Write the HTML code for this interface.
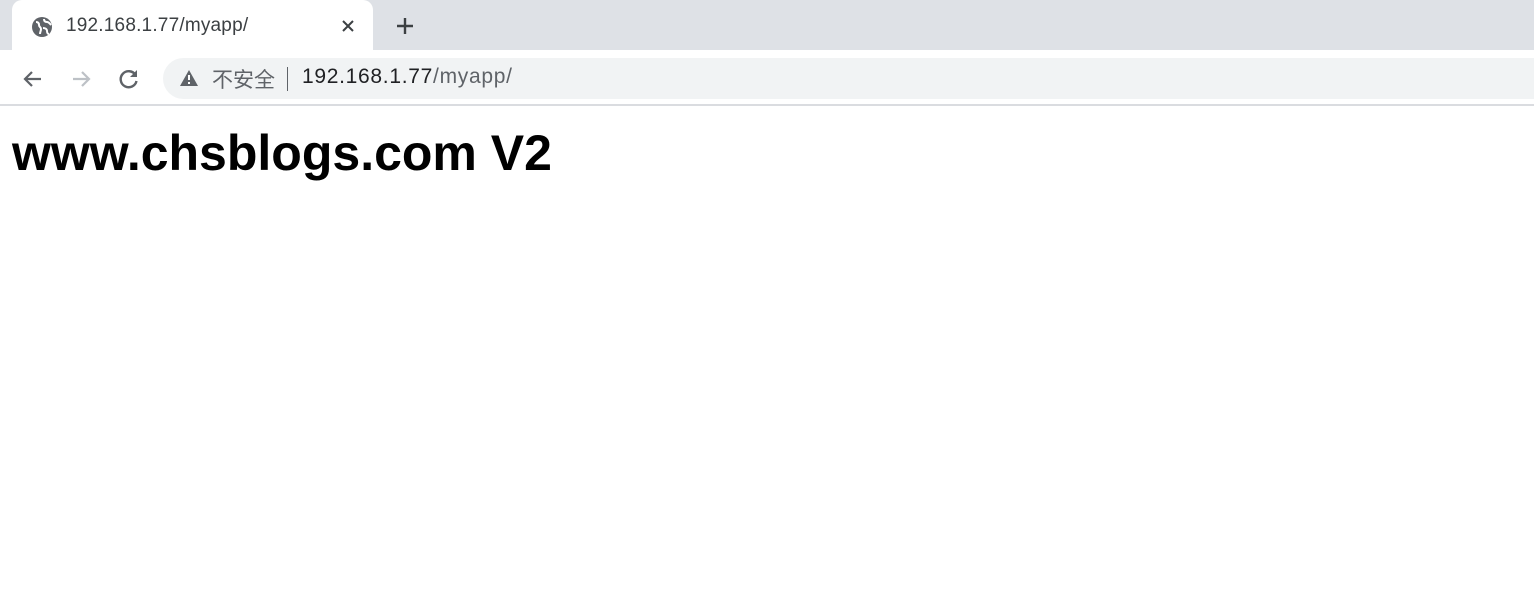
<!DOCTYPE html>
<html><head><meta charset="utf-8"><style>
*{margin:0;padding:0;box-sizing:border-box}
body{width:1534px;height:589px;background:#fff;font-family:"Liberation Sans","Noto Sans CJK SC",sans-serif;position:relative;overflow:hidden}
.tabbar{position:absolute;left:0;top:0;width:1534px;height:50px;background:#dee1e6}
.tab{position:absolute;left:12px;top:0;width:361px;height:50px;background:#fff;border-radius:10px 10px 0 0}
.tab .t{position:absolute;left:54px;top:15px;font-size:19px;letter-spacing:0.2px;color:#3c4043}
.abs{position:absolute}
.omni{position:absolute;left:163px;top:58px;width:1400px;height:41px;background:#f1f3f4;border-radius:21px}
.line{position:absolute;left:0;top:104px;width:1534px;height:2px;background:#dadce0}
h1{position:absolute;left:12px;top:123px;font-size:50px;font-weight:bold;color:#000;line-height:60px;white-space:nowrap}
</style></head><body>
<div class="tabbar"></div>
<div class="tab">
<svg class="abs" style="left:19px;top:16px" width="22" height="22" viewBox="0 0 22 22"><circle cx="11" cy="11" r="10" fill="#5f6368"/><path d="M5 6c2 0 3 1 3 3s2 2 2 4-1 3-1 5M13 3c0 2 1 3 3 3s3 2 4 3M12 12c2 0 4 1 4 3s1 3 2 3" stroke="#fff" stroke-width="2" fill="none"/></svg>
<div class="t">192.168.1.77/myapp/</div>
<svg class="abs" style="left:329px;top:19px" width="14" height="14" viewBox="0 0 14 14"><path d="M2 2L12 12M12 2L2 12" stroke="#3c4043" stroke-width="2"/></svg>
</div>
<svg class="abs" style="left:395px;top:16px" width="20" height="20" viewBox="0 0 20 20"><path d="M10 2V18M2 10H18" stroke="#3c4043" stroke-width="2.4"/></svg>
<svg class="abs" style="left:21px;top:67px" width="24" height="24" viewBox="0 0 24 24"><path d="M20 12H5M11 5L4 12L11 19" stroke="#5f6368" stroke-width="2.2" fill="none"/></svg>
<svg class="abs" style="left:69px;top:67px" width="24" height="24" viewBox="0 0 24 24"><path d="M4 12H19M13 5L20 12L13 19" stroke="#bdc1c6" stroke-width="2.2" fill="none"/></svg>
<svg class="abs" style="left:117px;top:67px" width="24" height="24" viewBox="0 0 24 24"><path d="M18.5 8A8 8 0 1 0 19.5 14" stroke="#5f6368" stroke-width="2.4" fill="none"/><path d="M20 3V10H13Z" fill="#5f6368"/></svg>
<div class="omni"></div>
<svg class="abs" style="left:179px;top:69px" width="20" height="18" viewBox="0 0 20 18"><path d="M10 1L19 17H1Z" fill="#5f6368"/><path d="M10 6V11M10 13V15" stroke="#fff" stroke-width="2"/></svg>
<div class="abs" style="left:212px;top:64px;font-size:21px;color:#5f6368">不安全</div>
<div class="abs" style="left:287px;top:67px;width:1px;height:24px;background:#5f6368"></div>
<div class="abs" style="left:302px;top:65px;font-size:21px;letter-spacing:0.7px;color:#202124">192.168.1.77<span style="color:#5f6368">/myapp/</span></div>
<div class="line"></div>
<h1>www.chsblogs.com V2</h1>
</body></html>
